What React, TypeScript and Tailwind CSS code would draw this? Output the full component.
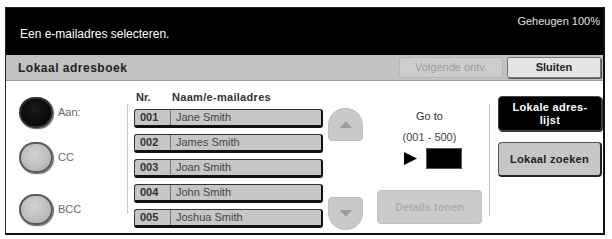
import React from "react";

const rows = [
  { nr: "001", name: "Jane Smith" },
  { nr: "002", name: "James Smith" },
  { nr: "003", name: "Joan Smith" },
  { nr: "004", name: "John Smith" },
  { nr: "005", name: "Joshua Smith" },
];

function Radio({ label, active, className }: { label: string; active?: boolean; className?: string }) {
  return (
    <div className={"flex items-center " + (className ?? "")}>
      <div
        className={
          "w-[34px] h-[31px] rounded-full border-2 shadow-[1px_1px_1px_#666] " +
          (active
            ? "bg-[radial-gradient(circle_at_45%_40%,#1a1a1a,#000)] border-[#333]"
            : "bg-[radial-gradient(circle_at_45%_40%,#d4d4d4,#ababab)] border-[#5a5a5a]")
        }
      />
      <span className="ml-[5px] text-[11px] text-[#666]">{label}</span>
    </div>
  );
}

export default function App() {
  return (
    <div className="w-[612px] h-[239px] bg-white pt-[7px] pl-[5px] font-['Liberation_Sans',Arial,sans-serif]">
      <div className="w-[600px] h-[228px] border-l border-t border-[#222] border-r-2 border-b-2 border-r-[#111] border-b-[#111] flex flex-col">
        {/* header */}
        <div className="h-[47px] bg-black relative flex items-end pl-[14px] pb-[15px]">
          <span className="text-white text-[12px] leading-none">Een e-mailadres selecteren.</span>
          <span className="absolute right-[3px] top-[8px] text-[11px] text-[#e0e0e0] leading-none">Geheugen 100%</span>
        </div>
        {/* title bar */}
        <div className="h-[26px] bg-[#c2c2c2] border-b border-[#9a9a9a] flex items-center pl-[12px] pr-[2px]">
          <span className="text-[12px] font-bold text-[#222] tracking-[0.5px]">Lokaal adresboek</span>
          <div className="ml-auto flex gap-[4px]">
            <div className="w-[104px] h-[21px] rounded-[3px] border border-[#b4b4b4] bg-[#cdcdcd] flex items-center justify-center text-[11px] text-[#9c9c9c]">
              Volgende ontv.
            </div>
            <div className="w-[94px] h-[21px] rounded-[2px] border border-[#777] bg-[#e4e4e4] shadow-[1px_1px_0_#555] flex items-center justify-center text-[11px] font-bold text-[#222]">
              Sluiten
            </div>
          </div>
        </div>
        {/* body */}
        <div className="flex-1 flex">
          {/* radios */}
          <div className="w-[121px] flex flex-col pl-[13px]">
            <Radio label="Aan:" active className="mt-[16px]" />
            <Radio label="CC" className="mt-[14px]" />
            <Radio label="BCC" className="mt-[21px]" />
          </div>
          <div className="w-px bg-[#c8c8c8] mt-[23px] h-[110px]" />
          {/* list */}
          <div className="w-[195px] pl-[6px] flex flex-col">
            <div className="flex h-[28px] items-center pt-[5px] text-[11px] font-bold text-[#333]">
              <span className="w-[38px] pl-[2px]">Nr.</span>
              <span className="tracking-[0.3px]">Naam/e-mailadres</span>
            </div>
            <div className="flex flex-col gap-[6px]">
              {rows.map((r) => (
                <div
                  key={r.nr}
                  className="h-[19px] w-[189px] flex rounded-[3px] border border-[#333] border-r-2 border-b-[3px] border-r-[#111] border-b-[#111] bg-[#c6c6c6] text-[11px] items-center"
                >
                  <span className="w-[36px] pl-[5px] font-bold text-[#333] border-r border-[#777] h-full flex items-center">{r.nr}</span>
                  <span className="pl-[5px] text-[#444]">{r.name}</span>
                </div>
              ))}
            </div>
          </div>
          {/* scroll */}
          <div className="w-[35px] ml-[5px] flex flex-col justify-between pt-[27px] pb-[3px]">
            <div className="h-[33px] rounded-t-[17px] rounded-b-[4px] bg-[#c9c9c9] border border-[#bdbdbd] flex items-center justify-center">
              <svg width="12" height="7" viewBox="0 0 12 7"><polygon points="6,0 12,7 0,7" fill="#9a9a9a" /></svg>
            </div>
            <div className="h-[33px] rounded-b-[17px] rounded-t-[4px] bg-[#c9c9c9] border border-[#bdbdbd] flex items-center justify-center">
              <svg width="12" height="7" viewBox="0 0 12 7"><polygon points="0,0 12,0 6,7" fill="#9a9a9a" /></svg>
            </div>
          </div>
          {/* go to */}
          <div className="w-[105px] ml-[14px] flex flex-col items-center">
            <span className="mt-[30px] text-[11px] text-[#333] leading-none">Go to</span>
            <span className="mt-[10px] text-[11px] text-[#444] leading-none">(001 - 500)</span>
            <div className="flex items-center mt-[5px] ml-[6px]">
              <svg width="13" height="13" viewBox="0 0 13 13"><polygon points="0,0 13,6.5 0,13" fill="#000" /></svg>
              <div className="ml-[9px] w-[36px] h-[21px] bg-black border border-[#555]" />
            </div>
            <div className="mt-[21px] w-[105px] h-[34px] rounded-[4px] bg-[#cbcbcb] border border-[#c0c0c0] flex items-center justify-center text-[11px] font-bold text-[#adadad]">
              Details tonen
            </div>
          </div>
          <div className="w-px bg-[#c8c8c8] ml-[7px] mt-[23px] h-[112px]" />
          {/* right buttons */}
          <div className="ml-[8px] flex flex-col gap-[11px] pt-[15px]">
            <div className="w-[104px] h-[35px] rounded-[4px] bg-black border border-[#444] shadow-[1px_1px_0_#333] flex items-center justify-center text-center text-[11px] font-bold text-white leading-[13px] tracking-[0.3px]">
              Lokale adres-
              <br />
              lijst
            </div>
            <div className="w-[104px] h-[35px] rounded-[4px] bg-[#c6c6c6] border border-[#555] border-r-2 border-b-2 border-r-[#222] border-b-[#222] flex items-center justify-center text-[11px] font-bold text-[#222] tracking-[0.3px]">
              Lokaal zoeken
            </div>
          </div>
        </div>
      </div>
    </div>
  );
}
